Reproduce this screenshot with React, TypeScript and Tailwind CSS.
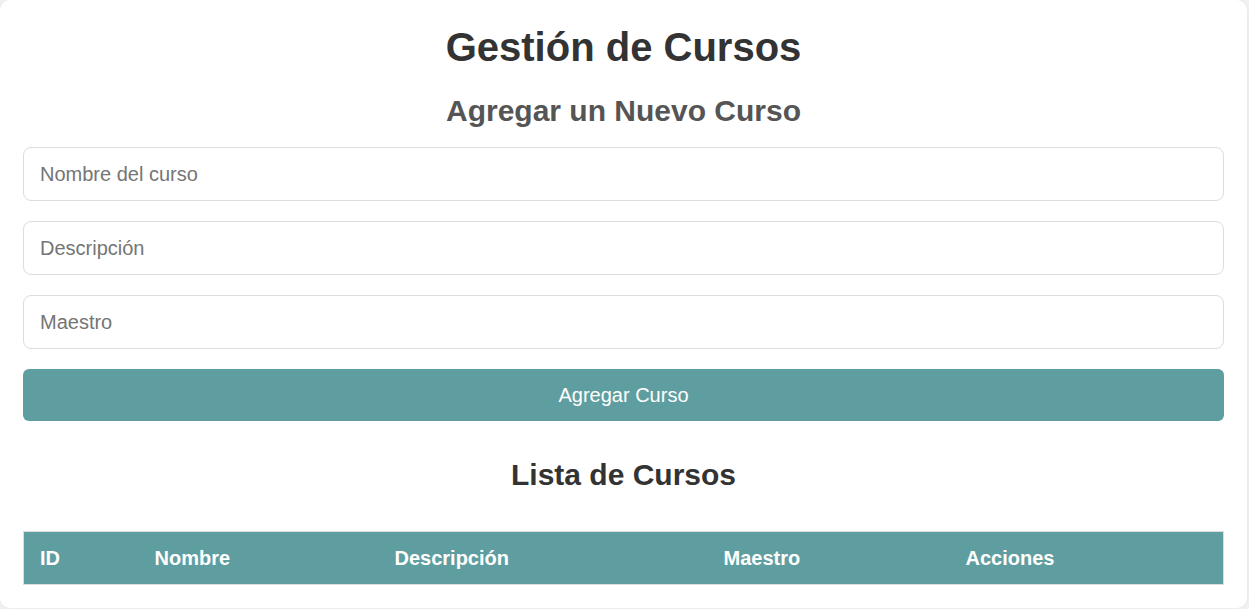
export default function App() {
  const inputs = ['Nombre del curso', 'Descripción', 'Maestro'];
  const cols = [
    { label: 'ID', w: 'w-[115px]' },
    { label: 'Nombre', w: 'w-[240px]' },
    { label: 'Descripción', w: 'w-[329px]' },
    { label: 'Maestro', w: 'w-[242px]' },
    { label: 'Acciones', w: '' },
  ];

  return (
    <div className="min-h-[609px] bg-[#f4f4f4] font-['Liberation_Sans',Arial,sans-serif]">
      <div className="mr-[2px] h-[608px] rounded-[10px] bg-white px-[23px] pt-[24px] shadow-[0_0_8px_rgba(0,0,0,0.08)]">
        <h1 className="text-center text-[40px] font-bold leading-[46px] text-[#333]">
          Gestión de Cursos
        </h1>
        <h2 className="mt-[24px] text-center text-[30px] font-bold leading-[34px] text-[#555]">
          Agregar un Nuevo Curso
        </h2>
        <form className="mt-[19px] flex flex-col gap-[20px]" onSubmit={(e) => e.preventDefault()}>
          {inputs.map((p) => (
            <input
              key={p}
              placeholder={p}
              className="h-[54px] w-full rounded-[8px] border border-[#ddd] px-[16px] text-[20px] text-[#333] placeholder:text-[#757575] outline-none"
            />
          ))}
          <button
            type="submit"
            className="h-[52px] w-full rounded-[6px] bg-[#5f9ea0] text-[20px] text-white"
          >
            Agregar Curso
          </button>
        </form>
        <h2 className="mt-[37px] text-center text-[30px] font-bold leading-[34px] text-[#333]">
          Lista de Cursos
        </h2>
        <table className="mt-[39px] w-full border-collapse border border-[#ddd]">
          <thead>
            <tr className="bg-[#5f9ea0]">
              {cols.map((c) => (
                <th
                  key={c.label}
                  className={`${c.w} h-[53px] px-[16px] text-left text-[20px] font-bold text-white`}
                >
                  {c.label}
                </th>
              ))}
            </tr>
          </thead>
          <tbody />
        </table>
      </div>
    </div>
  );
}
